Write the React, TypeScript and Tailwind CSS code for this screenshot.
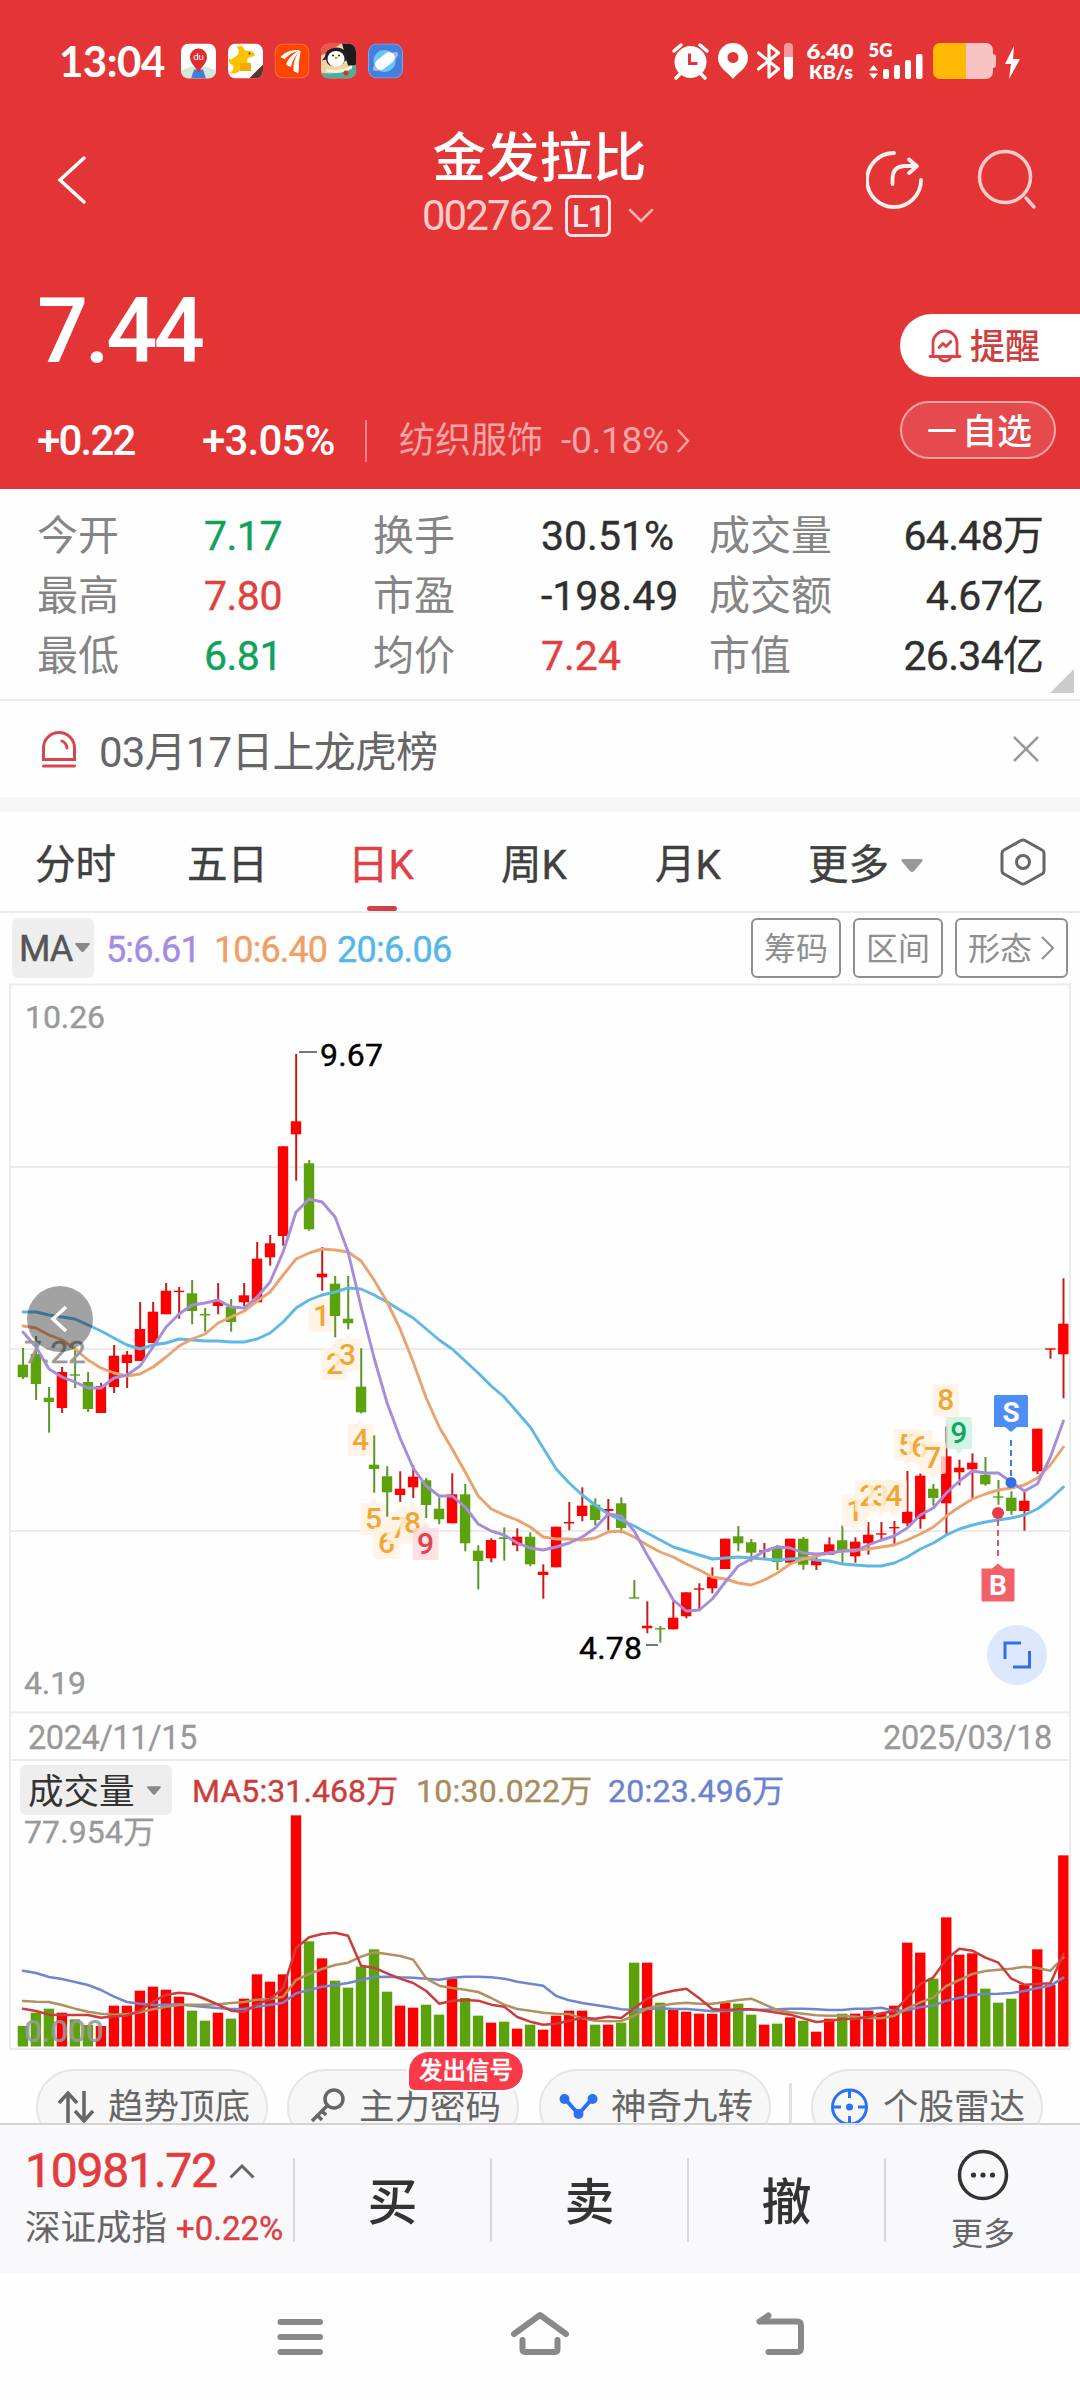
import React from "react";

/* ---------- chart data (pixel rows inside the plot) ---------- */

type Candle = [up: 0 | 1, top: number, bottom: number, high: number, low: number];

const STEP = 13.005;
const X0 = 23;
const cx = (i: number) => X0 + i * STEP;

const candles: Candle[] = [
  [0, 1364.7, 1377.3, 1348, 1379], [0, 1354, 1384, 1336, 1400], [0, 1397.7, 1402, 1387, 1432.7],
  [1, 1372, 1408, 1367, 1413], [0, 1374.3, 1375.7, 1350, 1388], [0, 1382, 1409, 1372, 1412],
  [1, 1386, 1413, 1383, 1413], [1, 1355.7, 1387, 1345, 1393], [1, 1354.7, 1363, 1351, 1388],
  [1, 1329, 1361, 1302, 1361], [1, 1311.7, 1343, 1302, 1343], [1, 1290.7, 1314.3, 1283, 1314],
  [1, 1290.7, 1292, 1287, 1318.7], [0, 1293.3, 1311, 1280, 1324.3], [0, 1314, 1315.3, 1308, 1331.7],
  [1, 1301, 1306, 1283, 1314.3], [0, 1306.7, 1322, 1299, 1331.7], [1, 1295.3, 1302.3, 1283, 1306],
  [1, 1258.7, 1302.3, 1242, 1302], [1, 1243.3, 1257.3, 1235, 1265.7], [1, 1146.3, 1236, 1146.3, 1245.7],
  [1, 1121.3, 1134.3, 1054, 1180.7], [0, 1163.3, 1229.3, 1160, 1230.7], [1, 1273.7, 1277.3, 1247, 1290.7],
  [0, 1283.7, 1316, 1276, 1337.3], [0, 1318.7, 1323.3, 1276, 1329.3], [0, 1386.7, 1412.3, 1348.3, 1413.3],
  [0, 1464.7, 1469, 1435.3, 1492.7], [0, 1476.3, 1492.3, 1466.3, 1516.7], [1, 1488.7, 1495, 1471.3, 1502],
  [1, 1476.7, 1487.3, 1465, 1498], [0, 1480.3, 1505, 1478, 1518], [0, 1508.7, 1519.3, 1497.3, 1524.3],
  [1, 1494.3, 1523.3, 1473.3, 1523.3], [0, 1494.3, 1543.3, 1484, 1551.3], [0, 1550.7, 1561, 1545.3, 1589.3],
  [1, 1540, 1558.3, 1538.3, 1562.3], [0, 1537.3, 1539, 1527.3, 1560.7], [1, 1536.7, 1545.3, 1528.3, 1551.3],
  [0, 1536.7, 1564.3, 1532.3, 1566.3], [1, 1571.7, 1575, 1564.3, 1598.7], [1, 1526.7, 1567.3, 1526.7, 1567.3],
  [1, 1522, 1523.5, 1502, 1530.3], [1, 1505.7, 1516, 1487.3, 1521.3], [0, 1504.7, 1520, 1498.3, 1525.3],
  [1, 1509, 1511, 1499, 1530.3], [0, 1503.3, 1528, 1497.3, 1533.3], [0, 1597.3, 1598.7, 1580, 1598],
  [1, 1625.7, 1628.3, 1601.3, 1633.3], [0, 1628, 1629.3, 1626, 1642.7], [1, 1617.7, 1629.3, 1601.3, 1629.3],
  [1, 1592.3, 1616.3, 1592.3, 1618.3], [1, 1588.3, 1589.7, 1583.3, 1611], [1, 1576.7, 1588.3, 1567.3, 1593.3],
  [1, 1538.7, 1569, 1538.7, 1569], [0, 1536.3, 1543.3, 1526, 1551.3], [0, 1542.3, 1552.7, 1539, 1561.7],
  [1, 1550.3, 1551.7, 1543, 1559.3], [0, 1547.7, 1562, 1545, 1570], [1, 1538.7, 1562.7, 1538.7, 1562.7],
  [0, 1538.7, 1564.7, 1537, 1569.7], [1, 1560, 1565.3, 1555, 1570], [1, 1544.3, 1554.7, 1537.3, 1554.7],
  [0, 1540.3, 1550, 1525, 1563], [1, 1541.7, 1556.3, 1537.3, 1562.7], [1, 1534.7, 1543.3, 1522, 1554.7],
  [1, 1533.3, 1534.7, 1522, 1541.3], [1, 1527, 1528.3, 1521, 1544.7], [1, 1511.7, 1523.3, 1471, 1526],
  [1, 1475.7, 1519, 1473.3, 1528.7], [0, 1488.7, 1498, 1484, 1505.7], [1, 1456.3, 1503.3, 1426.3, 1534],
  [1, 1467.7, 1472.3, 1459.7, 1485.3], [1, 1462.7, 1469.3, 1453.3, 1498.3], [0, 1474.7, 1484.3, 1457, 1485.7],
  [0, 1496.3, 1497.7, 1480, 1504.7], [0, 1497.7, 1511, 1491.3, 1514.7], [1, 1500.7, 1511, 1491, 1530.7],
  [1, 1428.7, 1471.3, 1428.7, 1474], [1, 1348.3, 1349.7, 1349, 1358.7], [1, 1323.7, 1354.3, 1278.3, 1398.3],
];

const ma5 = [1332, 1347, 1369, 1377, 1382, 1388, 1388, 1378, 1375, 1366, 1347, 1327, 1314, 1305, 1303, 1300, 1307, 1308, 1297, 1282, 1252, 1212, 1199, 1202, 1217, 1252, 1307, 1358, 1403, 1438, 1468, 1486, 1496, 1496, 1507, 1524, 1531, 1535, 1543, 1548, 1550, 1547, 1543, 1537, 1528, 1514, 1516, 1531, 1555, 1577, 1600, 1611, 1610, 1599, 1582, 1566, 1559, 1551, 1547, 1548, 1553, 1554, 1553, 1551, 1551, 1545, 1540, 1536, 1528, 1515, 1508, 1493, 1481, 1471, 1473, 1473, 1482, 1491, 1484, 1457, 1421];
const ma10 = [1326, 1328, 1335, 1340, 1349, 1360, 1368, 1373, 1376, 1374, 1367, 1357, 1346, 1339, 1334, 1323, 1317, 1311, 1301, 1292, 1275, 1259, 1253, 1249, 1250, 1252, 1261, 1280, 1302, 1329, 1362, 1398, 1427, 1449, 1472, 1496, 1509, 1515, 1520, 1527, 1537, 1539, 1539, 1540, 1538, 1532, 1531, 1537, 1545, 1552, 1557, 1564, 1570, 1577, 1579, 1583, 1585, 1580, 1573, 1564, 1559, 1556, 1553, 1551, 1550, 1549, 1547, 1545, 1540, 1534, 1527, 1516, 1507, 1499, 1494, 1490, 1488, 1485, 1478, 1465, 1447];
const ma20 = [1312, 1312, 1315, 1317, 1319, 1325, 1331, 1338, 1345, 1349, 1345, 1343, 1339, 1340, 1341, 1341, 1342, 1342, 1339, 1333, 1322, 1308, 1300, 1295, 1292, 1288, 1289, 1295, 1302, 1310, 1318, 1329, 1340, 1349, 1361, 1373, 1386, 1397, 1412, 1427, 1448, 1469, 1483, 1495, 1505, 1514, 1520, 1526, 1533, 1540, 1547, 1551, 1555, 1559, 1558, 1557, 1558, 1559, 1560, 1559, 1558, 1560, 1561, 1564, 1565, 1566, 1566, 1563, 1557, 1549, 1543, 1535, 1529, 1525, 1522, 1520, 1518, 1515, 1509, 1499, 1487];

/* volume series, in thirds of a pixel below row 1700 */
const vol = [978, 938, 926, 938, 958, 975, 978, 917, 917, 872, 860, 869, 890, 932, 962, 938, 956, 896, 823, 845, 823, 346, 724, 775, 842, 863, 800, 748, 875, 917, 923, 914, 944, 836, 894, 947, 968, 965, 986, 974, 989, 947, 932, 932, 974, 974, 968, 788, 788, 908, 930, 935, 941, 941, 908, 911, 944, 974, 971, 952, 962, 995, 956, 941, 941, 932, 938, 917, 728, 758, 836, 652, 764, 760, 866, 908, 896, 854, 748, 854, 466];
const v5 = [926, 933, 944, 945, 945, 945, 953, 949, 947, 932, 905, 884, 878, 882, 897, 914, 932, 936, 914, 897, 865, 744, 712, 702, 698, 707, 797, 803, 820, 836, 849, 873, 911, 903, 900, 902, 914, 920, 951, 965, 974, 971, 962, 953, 956, 950, 954, 925, 896, 881, 872, 866, 895, 927, 930, 928, 928, 932, 938, 944, 955, 966, 962, 957, 956, 952, 940, 934, 893, 852, 832, 778, 746, 752, 773, 788, 836, 854, 852, 850, 762];
const v10 = [903, 905, 906, 915, 926, 935, 941, 944, 942, 937, 928, 920, 915, 914, 914, 913, 909, 906, 899, 897, 890, 840, 822, 807, 795, 788, 770, 757, 762, 768, 779, 835, 857, 864, 869, 876, 894, 914, 927, 932, 938, 941, 942, 955, 962, 964, 963, 948, 925, 917, 911, 908, 911, 911, 906, 900, 896, 913, 930, 937, 941, 946, 947, 947, 950, 954, 955, 947, 925, 907, 892, 858, 840, 822, 813, 809, 806, 800, 804, 812, 772];
const v20 = [812, 819, 831, 837, 846, 855, 870, 890, 906, 911, 915, 914, 913, 917, 921, 924, 927, 927, 920, 914, 908, 880, 870, 860, 855, 849, 840, 831, 830, 832, 833, 836, 839, 833, 830, 830, 832, 836, 845, 851, 857, 888, 901, 909, 915, 921, 928, 930, 927, 925, 927, 927, 930, 934, 933, 930, 929, 929, 928, 926, 926, 928, 930, 930, 926, 926, 923, 933, 931, 921, 917, 902, 893, 885, 882, 881, 879, 873, 864, 857, 833];

const line = (ys: number[]) => ys.map((y, i) => `${cx(i).toFixed(1)},${y}`).join(" ");
const volY = (v: number) => 1700 + v / 3;

const RED = "#fe0000";
const GREEN = "#5ba20c";

/* nine-turn markers: candle index, digit, box top */
const marks: [number, string, number, "up" | "down"][] = [
  [23, "1", 1300, "up"], [24, "2", 1348, "up"], [25, "3", 1339, "up"], [26, "4", 1424, "up"], [27, "5", 1503, "up"],
  [28, "6", 1527, "up"], [29, "7", 1512, "up"], [30, "8", 1507, "up"], [31, "9", 1528, "up"],
  [64, "1", 1495, "down"], [65, "2", 1480, "down"], [66, "3", 1480, "down"], [67, "4", 1480, "down"], [68, "5", 1429, "down"],
  [69, "6", 1431, "down"], [70, "7", 1442, "down"], [71, "8", 1384, "down"], [72, "9", 1417, "down"],
];

function Mark({ m }: { m: (typeof marks)[number] }) {
  const [i, n, y, dir] = m;
  const x = cx(i) - 0.5;
  const nine = n === "9";
  const bg = nine ? (dir === "up" ? "#ffd9dc" : "#c8f0dc") : "#fff1e1";
  const fg = nine ? (dir === "up" ? "#dc4450" : "#11a663") : "#f0a633";
  const tip = dir === "up" ? `M${x - 4},${y} l4,-5 l4,5z` : `M${x - 4},${y + 32} l4,5 l4,-5z`;
  return (
    <g>
      <rect x={x - 13} y={y} width="26" height="32" rx="2" fill={bg} fillOpacity="0.8" />
      <path d={tip} fill={bg} fillOpacity="0.8" />
      <text x={x} y={y + 26} fontSize="30" fontWeight="500" textAnchor="middle" fill={fg}>{n}</text>
    </g>
  );
}

function PriceChart() {
  return (
    <svg className="block h-[731px] w-[1080px] overflow-visible" viewBox="0 982 1080 731" fill="none">
      <g stroke="#ebebeb" strokeWidth="2">
        <path d="M9,984.500H1071M10,1167H1070M10,1349H1070M10,1531H1070M9,1712.500H1071M10,984V1713M1070,984V1713" />
      </g>
      {marks.filter((m) => m[3] === "up").map((m) => <Mark key={`${m[0]}`} m={m} />)}
      {candles.map(([up, t, b, h, l], i) => (
        <g key={i} fill={up ? RED : GREEN}>
          <rect x={cx(i) - 0.9} y={h} width="2" height={l - h} fill={up ? "#c81a1a" : "#5b962a"} />
          <rect x={cx(i) - 5.3} y={t} width="10.4" height={Math.max(b - t, 1.4)} />
        </g>
      ))}
      {marks.filter((m) => m[3] === "down").map((m) => <Mark key={`${m[0]}`} m={m} />)}
      <g strokeWidth="2.9" strokeLinejoin="round" strokeLinecap="round">
        <polyline points={line(ma20)} stroke="#5fb8e4" />
        <polyline points={line(ma10)} stroke="#eaa36f" />
        <polyline points={line(ma5)} stroke="#a58ddc" />
      </g>
      <path d="M299,1052H317M646,1645H658" stroke="#777" strokeWidth="2" />
      <g fontSize="32" fill="#000" stroke="#000" strokeWidth="0.400">
        <text x="320" y="1065.500" textLength="63">9.67</text>
        <text x="579" y="1658.500" textLength="63">4.78</text>
      </g>
      <g fontSize="32" fill="#999" stroke="#999" strokeWidth="0.400">
        <text x="25" y="1027.500" textLength="80">10.26</text>
        <text x="24" y="1363" textLength="62">7.22</text>
        <text x="24" y="1693.500" textLength="62">4.19</text>
      </g>
      <circle cx="60" cy="1319" r="33" fill="#000" fillOpacity="0.36" />
      <path d="M66,1307L53,1319L66,1331" stroke="#fff" strokeWidth="3.500" />
      {/* sell and buy flags */}
      <path d="M1011,1440V1476" stroke="#3c7ceb" strokeWidth="2" strokeDasharray="6 4" />
      <circle cx="1011" cy="1482.500" r="5.500" fill="#2f6fea" />
      <path d="M995.500,1395h31a1.500,1.500 0 0 1 1.500,1.500v30.500h-11l-6,5l-6,-5h-11v-30.500a1.500,1.500 0 0 1 1.500,-1.500z" fill="#4c8df6" />
      <path d="M998,1520V1560" stroke="#cf5a64" strokeWidth="2" strokeDasharray="6 4" />
      <circle cx="998" cy="1513" r="6" fill="#ee3b4a" />
      <path d="M983,1601.500h30a1.500,1.500 0 0 0 1.500,-1.500v-31.500h-10.500l-6,-5l-6,5h-10.500v31.500a1.500,1.500 0 0 0 1.500,1.500z" fill="#f2606a" />
      <g fontSize="28" fontWeight="700" fill="#fff" textAnchor="middle">
        <text x="1011" y="1421.500">S</text>
        <text x="998" y="1595">B</text>
      </g>
      <circle cx="1017" cy="1655" r="30" fill="#dde8fd" />
      <path d="M1021,1643H1005V1659M1013,1667H1029.500V1651" stroke="#2f6fea" strokeWidth="3" />
    </svg>
  );
}

function VolumeChart() {
  return (
    <svg className="block h-[237px] w-[1080px] overflow-visible" viewBox="0 1815 1080 237" fill="none">
      <path d="M10,1815V2050M1070,1815V2050M9,2049H1071" stroke="#ebebeb" strokeWidth="2" />
      <text x="24" y="1842.500" fontSize="32" fill="#999" stroke="#999" strokeWidth="0.300" textLength="131">77.954万</text>
      {vol.map((v, i) => (
        <rect key={i} x={cx(i) - 5.300} y={volY(v)} width="10.400" height={2046.500 - volY(v)} fill={candles[i][0] ? RED : GREEN} />
      ))}
      <g strokeWidth="2.500" strokeLinejoin="round" strokeLinecap="round">
        <polyline points={line(v20.map(volY))} stroke="#6f86cd" />
        <polyline points={line(v10.map(volY))} stroke="#b0915f" />
        <polyline points={line(v5.map(volY))} stroke="#cb3d3d" />
      </g>
      <text x="24" y="2041.500" fontSize="32" fontWeight="500" fill="#999" fillOpacity="0.900" textLength="80">0.000</text>
    </svg>
  );
}

/* ---------- status bar ---------- */

function AppIcons() {
  return (
    <svg className="ml-4 block h-[36px] w-[223px]" viewBox="181 42.500 223 36" fill="none">
      <defs>
        {[181, 228, 274.500, 321, 368].map((x, i) => (
          <clipPath key={i} id={`app${i}`}><rect x={x} y="43" width="35" height="35" rx="8" /></clipPath>
        ))}
      </defs>
      <g clipPath="url(#app0)">
        <rect x="181" y="43" width="35" height="35" fill="#fff" />
        <path d="M181,70l10,-4h15l10,4v8h-35z" fill="#d5e8d6" />
        <path d="M194,69h9l3,9h-15z" fill="#3f7fd6" />
        <path d="M198.500,72c-3,-6 -8.500,-9 -8.500,-15.500a8.500,8.500 0 0 1 17,0c0,6.500 -5.500,9.500 -8.500,15.500z" fill="#e02b31" />
        <text x="198.500" y="59.500" fontSize="9.500" fill="#fff" textAnchor="middle">du</text>
      </g>
      <g clipPath="url(#app1)">
        <rect x="228" y="43" width="35" height="35" fill="#fff" />
        <path d="M237,47q0,-2 2,-1l2,-1q3,2 4,5q7,0 9,2.500q2,3 -1,3.500q-5,1 -6,3l1,5q-1,2 -3,2l-3,0l-3,5q-6,4 -9,1q5,-3 3,-7q-5,-2 -4,-7l2,1q5,-3 7,-5q2,-4 -1,-7z" fill="#fcc200" />
        <path d="M240,62.500h11v8h-11z" fill="#f8a70c" />
        <circle cx="249.500" cy="53" r="1" fill="#333" />
        <path d="M263,64v14h-14z" fill="#54382c" />
      </g>
      <g clipPath="url(#app2)">
        <rect x="275" y="43.500" width="34" height="34" rx="8" fill="#fe4601" stroke="#ff7a4b" />
        <path d="M281,56.500q6,-7 18,-6.500q-9,1.500 -14,8zM286.500,64q3,-9 13,-13.500q-7,6.500 -9,15.500zM294,70.500q-1,-11 6,-20q-2,11 -2,21.500z" fill="#fff" stroke="#fff" strokeWidth="1" strokeLinejoin="round" />
      </g>
      <g clipPath="url(#app3)">
        <rect x="321" y="43" width="35" height="35" fill="#f3d3a0" />
        <path d="M321,43h20l-8,6l-12,6z" fill="#e8574d" />
        <path d="M342,43h14v22h-8z" fill="#1d1a20" />
        <path d="M321,72q16,4 35,-8v14h-35z" fill="#4fae9a" />
        <path d="M325,56q0,-8 12,-9q9,0 10,10l3,4l-5,-1q-3,7 -10,6q-8,0 -9,-7l-4,1z" fill="#231f26" />
        <ellipse cx="336" cy="58.500" rx="8.500" ry="8" fill="#fff" />
        <circle cx="333" cy="55" r="1" fill="#222" />
        <circle cx="339" cy="55" r="1" fill="#222" />
        <path d="M334.500,56l4,1l-3,2z" fill="#f08a1d" />
        <path d="M326,68q12,4 26,-3v3q-12,7 -26,3z" fill="#f6f1e3" />
        <circle cx="346" cy="72.500" r="2.500" fill="#d8342e" />
      </g>
      <g clipPath="url(#app4)">
        <rect x="368.500" y="43.500" width="34" height="34" rx="8" fill="#457fdc" stroke="#7ba6ec" />
        <circle cx="384.500" cy="60.500" r="11" fill="#69c5f7" />
        <ellipse cx="385.500" cy="61" rx="15" ry="5" transform="rotate(-35 385.500 61)" fill="#9bb8ee" />
        <rect x="374" y="55" width="22" height="11" rx="5.500" transform="rotate(-38 385 60.500)" fill="#fff" />
      </g>
    </svg>
  );
}

function StatusIcons() {
  return (
    <svg className="block h-[60px] w-[350px]" viewBox="672 31 350 60" fill="none">
      <circle cx="690.500" cy="62" r="16" fill="#fff" />
      <path d="M674,51l7,-6M707,51l-7,-6M680,74l-4,4M701,74l4,4" stroke="#fff" strokeWidth="3.500" strokeLinecap="round" />
      <path d="M689.500,53.500v10h8" stroke="#e33536" strokeWidth="3" />
      <path d="M733,79c-5,-7 -15,-11 -15,-21a15,15 0 0 1 30,0c0,10 -10,14 -15,21z" fill="#fff" />
      <circle cx="733" cy="57.500" r="5.500" fill="#e33536" />
      <path d="M758.500,53l20,16l-9.500,8v-32l9.500,8l-20,16" stroke="#fff" strokeWidth="3.200" strokeLinejoin="round" strokeLinecap="round" />
      <rect x="784" y="43" width="9" height="36" rx="4" fill="#f49a9a" />
      <path d="M784,57h9v18a4,4 0 0 1 -9,0z" fill="#fff" />
      <g fill="#fff" fontFamily="Lato" fontWeight="800">
        <text x="806.500" y="58.500" fontSize="21.500" textLength="47" lengthAdjust="spacingAndGlyphs">6.40</text>
        <text x="809" y="78.500" fontSize="18.500" textLength="44" lengthAdjust="spacingAndGlyphs">KB/s</text>
        <text x="868.500" y="56.500" fontSize="18" textLength="24" lengthAdjust="spacingAndGlyphs">5G</text>
      </g>
      <path d="M869,70.500l4.500,-5.500l4.500,5.500zM869,73.500l4.500,5.500l4.500,-5.500z" fill="#fff" />
      <g fill="#fff">
        <rect x="883" y="69" width="6" height="10" rx="2" />
        <rect x="894" y="65" width="6" height="14" rx="2" />
        <rect x="905" y="60" width="6" height="19" rx="2" />
        <rect x="916" y="54" width="6.500" height="25" rx="2" />
      </g>
      <path d="M966,43h20a7,7 0 0 1 7,7v4q3,0 3,3v8q0,3 -3,3v4a7,7 0 0 1 -7,7h-20z" fill="#f8c3c3" />
      <path d="M966,43h-26a7,7 0 0 0 -7,7v22a7,7 0 0 0 7,7h26z" fill="#ffb803" />
      <path d="M1014,46l-9,18h6l-2,15l11,-20h-7z" fill="#fff" />
    </svg>
  );
}

/* ---------- small pieces ---------- */

const Caret = ({ className }: { className: string }) => (
  <svg className={className} viewBox="0 0 20 12" fill="currentColor"><path d="M1.500,0h17q2,0.500 1,2l-7.500,9q-2,2 -4,0l-7.500,-9q-1,-1.500 1,-2z" /></svg>
);

const statRows = [
  { a: "今开", av: "7.17", ac: "text-[#11a25a]", b: "换手", bv: "30.51%", bc: "text-[#2f2f2f]", c: "成交量", cn: "64.48", cu: "万" },
  { a: "最高", av: "7.80", ac: "text-[#e2403c]", b: "市盈", bv: "-198.49", bc: "text-[#2f2f2f]", c: "成交额", cn: "4.67", cu: "亿" },
  { a: "最低", av: "6.81", ac: "text-[#11a25a]", b: "均价", bv: "7.24", bc: "text-[#e2403c]", c: "市值", cn: "26.34", cu: "亿" },
];

function Header() {
  return (
    <header className="h-[489px] bg-[#e33536] text-white">
      <div className="flex h-[121px] items-center pl-[59px] pr-[58px]">
        <span className="w-[106px] whitespace-nowrap font-['Lato'] text-[42px] font-bold leading-[42px] tracking-[-0.500px]">13:04</span>
        <AppIcons />
        <div className="ml-auto"><StatusIcons /></div>
      </div>

      <div className="flex h-[133px] justify-between pl-[56px]">
        <svg className="mt-[33px] h-[52px] w-[32px]" viewBox="0 0 32 52" fill="none" stroke="#fff" strokeWidth="3.500" strokeLinecap="round">
          <path d="M28,4L4,26L28,48" />
        </svg>
        <div className="ml-[122px] flex flex-col items-center pt-[9px]">
          <div className="pl-[3px] text-[53.500px] font-medium leading-[58px]">金发拉比</div>
          <div className="mt-[5px] flex h-[46px] items-center">
            <span className="text-[42px] leading-[46px] tracking-[-1.900px] text-[#ffcbcb]">002762</span>
            <span className="ml-[13px] flex h-[42px] w-[46px] items-center justify-center rounded-[7px] border-[3px] border-[#ffe3e3] text-[31px] font-medium leading-none tracking-[-1px] text-[#ffe8e8]">L1</span>
            <svg className="ml-[17px] h-[16px] w-[26px]" viewBox="0 0 26 16" fill="none" stroke="#ffb5b5" strokeWidth="2.500" strokeLinecap="round"><path d="M2,2L13,13L24,2" /></svg>
          </div>
        </div>
        <svg className="mt-[28px] h-[62px] w-[214px]" viewBox="866 149 214 62" fill="none" strokeLinecap="round" strokeLinejoin="round">
          <path d="M894,153a27,27 0 1 0 27,27" stroke="#fff0f0" strokeWidth="3.800" />
          <path d="M892.500,184v-5q0,-13 13,-13h11M909,159.500l8,6.800l-8,6.800" stroke="#fff0f0" strokeWidth="3.800" />
          <circle cx="1005" cy="177" r="25.500" stroke="#ffcbcb" strokeWidth="3.500" />
          <path d="M1026,198l8,9" stroke="#ffcbcb" strokeWidth="3.500" />
        </svg>
      </div>

      <div className="flex">
        <div className="flex-1 pl-[37px]">
          <div className="mt-[27px] text-[90px] font-medium leading-[102px] tracking-[-3.500px]">7.44</div>
          <div className="mt-[36px] flex h-[44px] items-center text-[42px] leading-[44px]">
            <span className="w-[165px] font-medium tracking-[-1.800px]">+0.22</span>
            <span className="w-[163px] font-medium tracking-[-0.800px]">+3.05%</span>
            <span className="h-[42px] w-[2px] bg-[#f08586]" />
            <span className="ml-[32px] text-[36px] text-[#f8a5a5]">纺织服饰</span>
            <span className="ml-[18px] text-[37px] tracking-[-0.300px] text-[#f8a5a5]">-0.18%</span>
            <svg className="ml-[7px] h-[24px] w-[14px]" viewBox="0 0 14 24" fill="none" stroke="#f8a5a5" strokeWidth="2.500"><path d="M2,1L12,12L2,23" /></svg>
          </div>
        </div>
        <div className="w-[180px] pt-[60px]">
          <div className="flex h-[63px] items-center rounded-l-full bg-white pl-[28px] text-[#cb3f3f]">
            <svg className="h-[36px] w-[34px]" viewBox="0 0 34 36" fill="none" stroke="#dc4048" strokeWidth="2.800" strokeLinecap="round" strokeLinejoin="round">
              <path d="M2,28.500h30M5,28V15a12,12 0 0 1 24,0V28M11,29a6.500,6.500 0 0 0 12,0M11,19.500l4,-4l3,3l5,-5" />
            </svg>
            <span className="ml-[8px] pt-[3px] text-[35px] font-[450] leading-none">提醒</span>
          </div>
          <div className="mt-[24px] flex h-[58px] w-[156px] items-center rounded-full border-[2px] border-[#f6a3a3] bg-[#e54a4c] pl-[26px]">
            <span className="h-[3px] w-[28px] rounded bg-white" />
            <span className="ml-[6px] pt-[4px] text-[35px] font-[450] leading-none">自选</span>
          </div>
        </div>
      </div>
    </header>
  );
}

const Tool = ({ label, children, className }: { label: string; children: React.ReactNode; className: string }) => (
  <div className={`flex h-[76px] w-[232px] shrink-0 items-center rounded-full border-2 border-[#e5e5e5] bg-[#f7f7f7] pl-[17px] ${className}`}>
    {children}
    <span className="ml-[11px] pt-[2px] text-[35.500px] leading-none text-[#666]">{label}</span>
  </div>
);

export default function App() {
  return (
    <div className="h-[2400px] w-[1080px] overflow-hidden whitespace-nowrap bg-[#fefefe] font-['Roboto','Noto_Sans_CJK_SC',sans-serif]">
      <Header />

      {/* key figures */}
      <section className="relative h-[212px] border-b-[2px] border-[#ebebeb] pl-[37px] pr-[36px] pt-[17px] text-[41px] leading-[60px]">
        {statRows.map((r) => (
          <div key={r.a} className="flex h-[60px] text-[#858585]">
            <span className="w-[167px]">{r.a}</span>
            <span className={`w-[169px] tracking-[-0.500px] [-webkit-text-stroke:0.4px] ${r.ac}`}>{r.av}</span>
            <span className="w-[168px]">{r.b}</span>
            <span className={`w-[168px] [-webkit-text-stroke:0.4px] ${r.bc}`}>{r.bv}</span>
            <span>{r.c}</span>
            <span className="ml-auto tracking-[-0.700px] text-[#2f2f2f] [-webkit-text-stroke:0.4px]">{r.cn}</span>
            <span className="text-[#2f2f2f] [-webkit-text-stroke:0.3px]">{r.cu}</span>
          </div>
        ))}
        <svg className="absolute bottom-[6px] right-[6px] h-[24px] w-[24px]" viewBox="0 0 24 24" fill="#ccc"><path d="M24,0V24H0z" /></svg>
      </section>

      {/* notice */}
      <section className="flex h-[96px] items-center pl-[40px] pr-[40px]">
        <svg className="mt-[2px] h-[40px] w-[38px]" viewBox="0 0 38 40" fill="none" stroke="#d5474c" strokeWidth="3" strokeLinecap="round">
          <path d="M3.500,29.500V18a15.500,15.500 0 0 1 31,0V29.500zM3.500,36h31M22,11q4.500,2 5,7" />
        </svg>
        <span className="ml-[21px] mt-[7px] text-[42px] leading-[60px] tracking-[-0.800px] text-[#666]">03月17日上龙虎榜</span>
        <svg className="ml-auto h-[28px] w-[28px]" viewBox="0 0 28 28" fill="none" stroke="#999" strokeWidth="2.500"><path d="M2,2L26,26M26,2L2,26" /></svg>
      </section>
      <div className="h-[15px] bg-[#f7f7f7]" />

      {/* period tabs */}
      <nav className="relative flex h-[101px] items-center border-b-[2px] border-[#ebebeb] pl-[35px] pr-[34px] pt-[7px] text-[40.500px] leading-[60px] text-[#404040] [-webkit-text-stroke:0.4px]">
        <span className="w-[152px]">分时</span>
        <span className="w-[161px]">五日</span>
        <span className="w-[153px] text-[#e23f48]">日K</span>
        <span className="w-[154px]">周K</span>
        <span className="w-[153px]">月K</span>
        <span>更多</span>
        <Caret className="ml-[12px] h-[13px] w-[22px] text-[#999]" />
        <svg className="ml-auto mt-[-7px] h-[48px] w-[46px]" viewBox="0 0 46 48" fill="none" stroke="#666" strokeWidth="3" strokeLinejoin="round">
          <path d="M21,2.500q2,-1 4,0l17,9.500q2,1 2,3v18q0,2 -2,3l-17,9.500q-2,1 -4,0l-17,-9.500q-2,-1 -2,-3v-18q0,-2 2,-3z" />
          <circle cx="23" cy="24" r="6.500" />
        </svg>
        <span className="absolute bottom-0 left-[367px] h-[5px] w-[30px] rounded bg-[#cb4248]" />
      </nav>

      {/* moving averages */}
      <div className="flex h-[69px] items-center pl-[12px] pr-[12px] text-[36px] leading-[60px]">
        <span className="flex h-[60px] w-[82px] items-center rounded-[6px] bg-[#eee] pl-[7px] pt-[3px] tracking-[-1px] text-[#555] [-webkit-text-stroke:0.5px]">
          MA<Caret className="ml-[3px] mt-[-3px] h-[9px] w-[15px] text-[#888]" />
        </span>
        <span className="ml-[12px] w-[108px] pt-[4px] tracking-[-0.900px] text-[#a48be3] [-webkit-text-stroke:0.4px]">5:6.61</span>
        <span className="w-[123px] pt-[4px] tracking-[-0.900px] text-[#efa063] [-webkit-text-stroke:0.4px]">10:6.40</span>
        <span className="pt-[4px] tracking-[-0.700px] text-[#55b6ea] [-webkit-text-stroke:0.4px]">20:6.06</span>
        <div className="ml-auto flex gap-[12px] text-[32px] text-[#8f8f8f]">
          <span className="flex h-[60px] w-[90px] items-center justify-center rounded-[6px] border-[2px] border-[#8f8f8f] pt-[3px]">筹码</span>
          <span className="flex h-[60px] w-[90px] items-center justify-center rounded-[6px] border-[2px] border-[#8f8f8f] pt-[3px]">区间</span>
          <span className="flex h-[60px] w-[113px] items-center rounded-[6px] border-[2px] border-[#8f8f8f] pl-[11px] pt-[3px]">
            形态
            <svg className="ml-[9px] mt-[-3px] h-[24px] w-[14px]" viewBox="0 0 14 24" fill="none" stroke="#8f8f8f" strokeWidth="2"><path d="M1,1L12,12L1,23" /></svg>
          </span>
        </div>
      </div>

      <PriceChart />

      <div className="mx-[9px] flex h-[48px] items-center justify-between border-x-[2px] border-b-[2px] border-[#ebebeb] px-[17px] pt-[3px] text-[32.500px] leading-[44px] tracking-[-0.400px] text-[#999] [-webkit-text-stroke:0.3px]">
        <span>2024/11/15</span>
        <span>2025/03/18</span>
      </div>
      <div className="mx-[9px] flex h-[54px] items-center border-x-[2px] border-[#ebebeb] pl-[9px] pt-[4px] text-[32px] leading-[50px]">
        <span className="flex h-[50px] w-[152px] items-center rounded-[6px] bg-[#eee] pl-[8px] pt-[3px] text-[35.500px] text-[#333]">
          成交量<Caret className="ml-[12px] mt-[-3px] h-[9px] w-[14px] text-[#888]" />
        </span>
        <span className="ml-[20px] w-[224px] pt-[1px] tracking-[0.100px] text-[#cb3d3d] [-webkit-text-stroke:0.4px]">MA5:31.468万</span>
        <span className="w-[192px] pt-[1px] tracking-[0.250px] text-[#a98c5c] [-webkit-text-stroke:0.4px]">10:30.022万</span>
        <span className="pt-[1px] tracking-[0.250px] text-[#6a82d0] [-webkit-text-stroke:0.4px]">20:23.496万</span>
      </div>
      <VolumeChart />

      {/* indicator shortcuts, cut off by the trade bar */}
      <div className="relative flex h-[71px] items-start overflow-hidden pl-[36px] pt-[17px]">
        <Tool label="趋势顶底" className="">
          <svg className="h-[36px] w-[42px]" viewBox="0 0 42 36" fill="none" stroke="#666" strokeWidth="3.500"><path d="M13,34V5M4,14L13,4L22,14M29,2V31M20,22L29,32L38,22" /></svg>
        </Tool>
        <Tool label="主力密码" className="ml-[19px]">
          <svg className="h-[40px] w-[42px]" viewBox="0 0 42 40" fill="none" stroke="#666" strokeWidth="3.500"><circle cx="28" cy="12" r="9" /><path d="M21.500,18.500L6,34M11,28l5,5M16,24l4,4" /></svg>
        </Tool>
        <Tool label="神奇九转" className="ml-[20px]">
          <svg className="h-[36px] w-[42px]" viewBox="0 0 42 36" fill="#2a72f4"><path d="M7,10L20.500,25L34,10" fill="none" stroke="#2a72f4" strokeWidth="4" /><circle cx="6.500" cy="10" r="5" /><circle cx="34.500" cy="10" r="5" /><circle cx="20.500" cy="25" r="5" /></svg>
        </Tool>
        <span className="ml-[18px] mt-[14px] h-[60px] w-[3px] shrink-0 bg-[#e0e0e0]" />
        <Tool label="个股雷达" className="ml-[19px]">
          <svg className="h-[42px] w-[42px]" viewBox="0 0 42 42" fill="none" stroke="#2a72f4" strokeWidth="3"><circle cx="19.500" cy="21" r="17" /><path d="M19.500,4V12M19.500,30V38M2.500,21H11M28,21H36.500" /><circle cx="19.500" cy="21" r="3.500" fill="#2a72f4" stroke="none" /></svg>
        </Tool>
        <span className="absolute left-[409px] top-0 flex h-[38px] w-[114px] items-center justify-center rounded-[19px] rounded-bl-[5px] bg-[#f83a4a] pt-[2px] text-[23.500px] font-[450] leading-none text-white outline-2 outline-white [-webkit-text-stroke:0.4px]">发出信号</span>
      </div>

      {/* trade bar */}
      <footer className="flex h-[151px] border-t-[2px] border-[#d4d4d4] bg-[#f9f9fc] text-[#333]">
        <div className="w-[293px] pl-[25px] pt-[18px]">
          <div className="flex h-[56px] items-center text-[48px] leading-[56px] tracking-[-1.200px] text-[#e23c3c] [-webkit-text-stroke:0.6px]">
            10981.72
            <svg className="ml-[12px] h-[15px] w-[26px]" viewBox="0 0 26 15" fill="none" stroke="#666" strokeWidth="3"><path d="M1.500,13.500L13,2L24.500,13.500" /></svg>
          </div>
          <div className="mt-[5px] flex h-[50px] items-center text-[35.500px] text-[#666]">
            深证成指<span className="ml-[9px] text-[33px] text-[#dd3f3f] [-webkit-text-stroke:0.4px]">+0.22%</span>
          </div>
        </div>
        {["买", "卖", "撤"].map((t) => (
          <div key={t} className="flex w-[197px] items-center">
            <span className="h-[84px] w-[2px] bg-[#d9d9dc]" />
            <span className="flex-1 pt-[6px] text-center text-[50px] font-medium leading-[60px]">{t}</span>
          </div>
        ))}
        <div className="flex flex-1 items-center">
          <span className="h-[84px] w-[2px] bg-[#d9d9dc]" />
          <div className="flex flex-1 flex-col items-center pt-[4px]">
            <svg className="h-[52px] w-[52px]" viewBox="0 0 52 52" fill="#333"><circle cx="26" cy="26" r="23.500" fill="none" stroke="#333" strokeWidth="3.500" /><circle cx="16.500" cy="26" r="2.600" /><circle cx="26" cy="26" r="2.600" /><circle cx="35.500" cy="26" r="2.600" /></svg>
            <span className="mt-[12px] text-[32px] leading-[42px] text-[#666]">更多</span>
          </div>
        </div>
      </footer>

      {/* system navigation */}
      <div className="flex h-[126px] items-start justify-center pt-[34px]">
        <svg className="h-[54px] w-[540px]" viewBox="270 2308 540 54" fill="none" stroke="#898989" strokeWidth="6" strokeLinecap="round" strokeLinejoin="round">
          <path d="M280.500,2322H320M280.500,2337H320M280.500,2352H320" />
          <path d="M514,2334L540,2315L566,2334" />
          <path d="M522.500,2340v9q0,3 3,3h29q3,0 3,-3v-9" />
          <path d="M759.500,2321.500L768.500,2315.500M759.500,2321.500H797q4,0 4,4V2348q0,4 -4,4H768.500" />
        </svg>
      </div>
    </div>
  );
}
